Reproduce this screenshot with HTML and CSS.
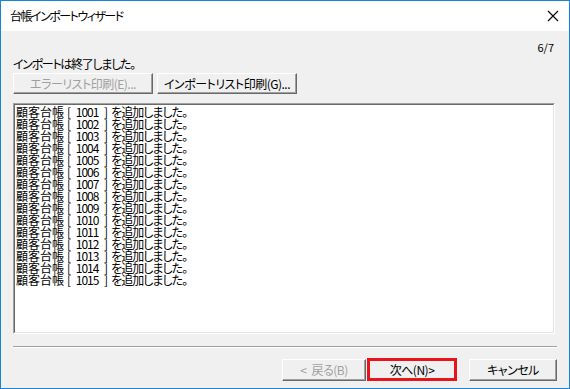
FILE: index.html
```html
<!DOCTYPE html>
<html lang="ja">
<head>
    <meta charset="UTF-8">
    <meta name="viewport" content="width=device-width, initial-scale=1.0">
    <title>台帳インポートウィザード</title>
    <link rel="stylesheet" href="styles.css">
</head>
<body>
    <div class="dialog">
        <div class="titlebar">
            <span class="title">台帳インポートウィザード</span>
            <svg class="close" width="12" height="12" viewBox="0 0 12 12">
                <path d="M1 1 L11 11 M11 1 L1 11" stroke="#000" stroke-width="1.1" fill="none"/>
            </svg>
        </div>
        <div class="content">
            <div class="step">6/7</div>
            <div class="message">インポートは終了しました。</div>
            <div class="print-row">
                <button class="btn wide" disabled>エラーリスト印刷(E)...</button>
                <button class="btn wide">インポートリスト印刷(G)...</button>
            </div>
            <div class="log-outer">
                <div class="log" id="log"></div>
            </div>
            <div class="separator"></div>
            <div class="nav-row">
                <button class="btn nav back" disabled>&lt; 戻る(B)</button>
                <button class="btn nav next">次へ(N)&gt;</button>
                <button class="btn nav cancel">キャンセル</button>
            </div>
        </div>
    </div>
    <script>
        const log = document.getElementById('log');
        for (let i = 1001; i <= 1015; i++) {
            const line = document.createElement('div');
            line.innerHTML = '顧客台帳<span class="code">[ ' + i + ' ]</span><span class="done">を追加しました。</span>';
            log.appendChild(line);
        }
    </script>
</body>
</html>
```

FILE: styles.css
```css
body {
    margin: 0;
    padding: 0;
    font-family: 'Noto Sans CJK JP', 'Noto Sans', sans-serif;
    font-size: 12px;
    font-feature-settings: "palt";
    color: #000;
    background-color: #f0f0f0;
}
.dialog {
    width: 568px;
    height: 387px;
    border: 1px solid #1883d7;
    background-color: #f0f0f0;
    display: flex;
    flex-direction: column;
}

/* Title bar */
.titlebar {
    height: 30px;
    background-color: #fff;
    display: flex;
    align-items: center;
    justify-content: space-between;
    padding: 0 10px 0 9px;
}
.title {
    font-size: 12px;
    line-height: 14px;
    letter-spacing: -1.5px;
}
.close {
    display: block;
}

/* Body */
.content {
    padding: 0 12px;
}
.step {
    margin-top: 10px;
    height: 13px;
    line-height: 13px;
    text-align: right;
    font-size: 11px;
    padding-right: 3px;
}
.message {
    margin-top: 2px;
    height: 16px;
    line-height: 16px;
    letter-spacing: -1.3px;
}
.print-row {
    margin-top: 1px;
    display: flex;
    gap: 4px;
}

/* Classic buttons */
.btn {
    font-family: 'Noto Sans CJK JP', 'Noto Sans', sans-serif;
    font-size: 12px;
    font-feature-settings: "palt";
    letter-spacing: -0.5px;
    color: #000;
    background-color: #f0f0f0;
    border-top: 1px solid #fff;
    border-left: 1px solid #fff;
    border-right: 1px solid #696969;
    border-bottom: 1px solid #696969;
    box-shadow: inset -1px -1px 0 #a0a0a0;
    padding: 0;
    margin: 0;
    line-height: 16px;
}
.btn:disabled {
    color: #a0a0a0;
}
.wide {
    width: 140px;
    height: 21px;
}

/* Log box */
.log-outer {
    margin-top: 9px;
    margin-right: 2px;
    height: 229px;
    border-top: 1px solid #a0a0a0;
    border-left: 1px solid #a0a0a0;
    border-right: 1px solid #fff;
    border-bottom: 1px solid #fff;
}
.log {
    height: 100%;
    box-sizing: border-box;
    background-color: #fff;
    border-top: 1px solid #696969;
    border-left: 1px solid #696969;
    border-right: 1px solid #e3e3e3;
    border-bottom: 1px solid #e3e3e3;
    padding: 1px 0 0 1px;
    font-size: 12px;
    line-height: 12px;
    white-space: pre;
}
.code {
    margin: 0 4px 0 3px;
    word-spacing: 4px;
    letter-spacing: -1px;
}
.done {
    letter-spacing: -1px;
}

.separator {
    margin-top: 12px;
    height: 1px;
    border-top: 1px solid #a0a0a0;
    background-color: #fff;
}

/* Wizard navigation */
.nav-row {
    margin-top: 10px;
    display: flex;
    align-items: center;
    justify-content: flex-end;
}
.nav {
    width: 84px;
    height: 22px;
}
.back {
    word-spacing: 3px;
}
.next {
    width: 90px;
    height: 23px;
    margin-left: 1px;
    border: 3px solid #e8141b;
    box-shadow: none;
}
.cancel {
    width: 88px;
    margin-left: 12px;
}
```
